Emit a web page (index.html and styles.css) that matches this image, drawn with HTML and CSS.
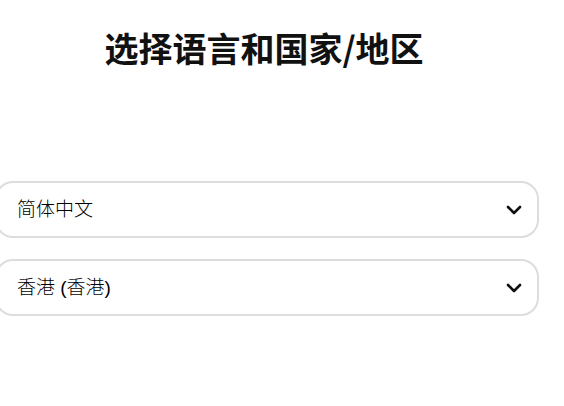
FILE: index.html
```html
<!DOCTYPE html>
<html lang="zh-CN">
<head>
<meta charset="utf-8">
<title>选择语言和国家/地区</title>
<link rel="stylesheet" href="styles.css">
</head>
<body>
<div class="page">
  <h1 class="title">选择语言和国家/地区</h1>
  <div class="fields">
    <div class="select">
      <span class="select-label">简体中文</span>
      <svg class="chevron" width="16" height="10" viewBox="0 0 16 10"><path d="M2 2 L8 8 L14 2" fill="none" stroke="#111" stroke-width="2.6" stroke-linecap="round" stroke-linejoin="round"/></svg>
    </div>
    <div class="select">
      <span class="select-label">香港 (香港)</span>
      <svg class="chevron" width="16" height="10" viewBox="0 0 16 10"><path d="M2 2 L8 8 L14 2" fill="none" stroke="#111" stroke-width="2.6" stroke-linecap="round" stroke-linejoin="round"/></svg>
    </div>
  </div>
</div>
</body>
</html>
```
FILE: styles.css
```css
html, body {
  margin: 0;
  padding: 0;
  background: #ffffff;
}
body {
  font-family: "Liberation Sans", "Noto Sans CJK SC", sans-serif;
  color: #111111;
  overflow: hidden;
}
.page {
  margin-left: -5px;
  width: 544px;
  padding-top: 28px;
}
.title {
  margin: 0;
  padding-right: 6px;
  text-align: center;
  font-family: "Noto Sans CJK SC", sans-serif;
  font-weight: 700;
  font-size: 34px;
  line-height: 40px;
  color: #111111;
}
.fields {
  margin-top: 113px;
  display: flex;
  flex-direction: column;
  gap: 21px;
}
.select {
  box-sizing: border-box;
  height: 57px;
  border: 2px solid #dddddd;
  border-radius: 18px;
  display: flex;
  align-items: center;
  justify-content: space-between;
  padding: 0 15px 0 20px;
}
.select-label {
  font-size: 19px;
  font-weight: 300;
  line-height: 24px;
  color: #000000;
}
.chevron {
  display: block;
}
```
